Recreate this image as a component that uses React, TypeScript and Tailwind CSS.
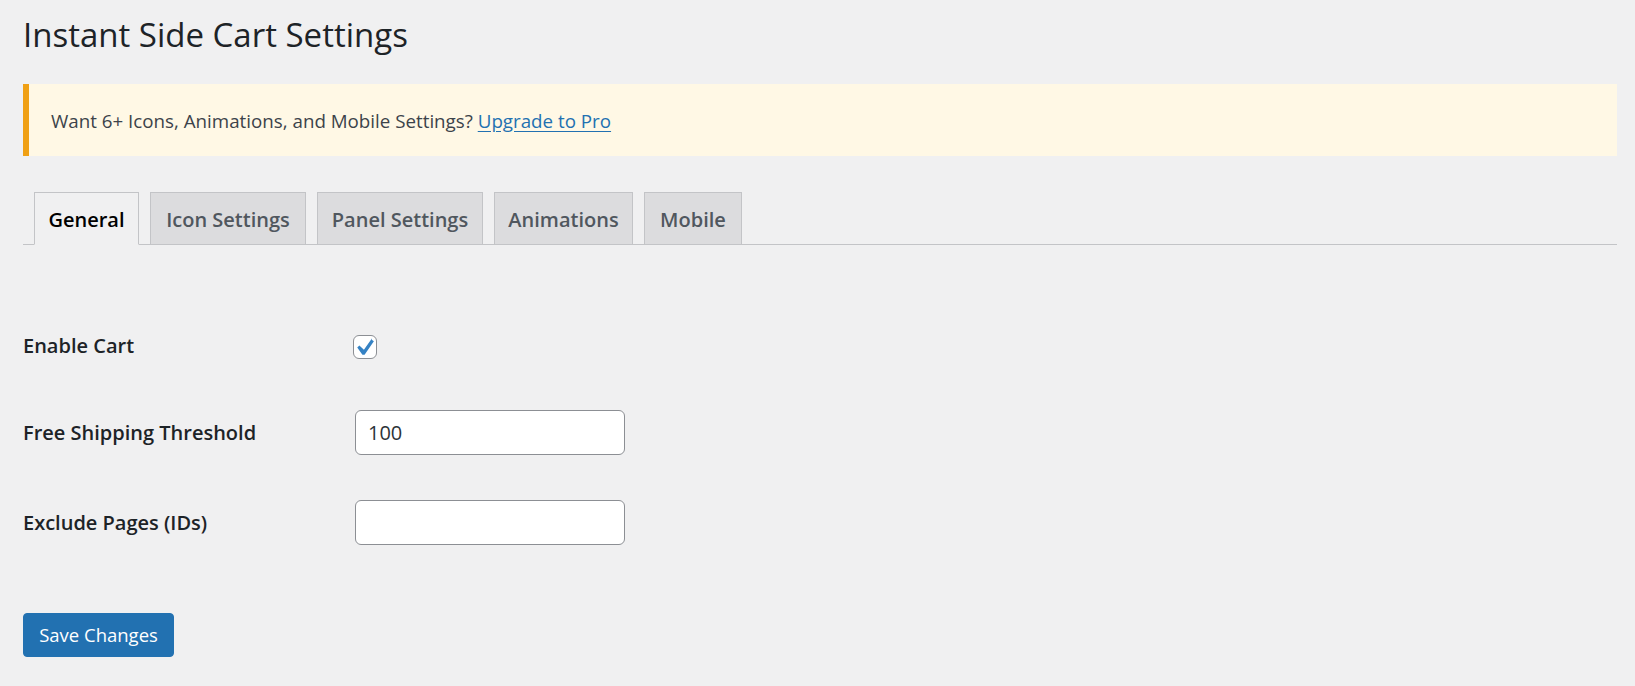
import { useState } from "react";

const tabs = [
  { label: "General", width: "w-[105px]" },
  { label: "Icon Settings", width: "w-[156px]" },
  { label: "Panel Settings", width: "w-[166px]" },
  { label: "Animations", width: "w-[139px]" },
  { label: "Mobile", width: "w-[98px]" },
];

export default function App() {
  const [active, setActive] = useState("General");
  const [enabled, setEnabled] = useState(true);
  const [threshold, setThreshold] = useState("100");
  const [exclude, setExclude] = useState("");

  return (
    <div className="min-h-screen bg-[#f0f0f1] pl-[23px] pr-[18px] font-['Open_Sans','Noto_Sans',sans-serif] text-[#3c434a]">
      <h1 className="pt-[14px] text-[33px] leading-[42px] font-normal text-[#1d2327]">
        Instant Side Cart Settings
      </h1>

      {/* Upsell notice */}
      <div className="mt-[28px] flex h-[72px] items-center border-l-[6px] border-[#f0a014] bg-[#fff8e5] pl-[22px]">
        <p className="text-[18.75px] leading-[27px] text-[#3c434a]">
          Want 6+ Icons, Animations, and Mobile Settings?{" "}
          <a href="#" className="text-[#2271b1] underline underline-offset-[3px]">
            Upgrade to Pro
          </a>
        </p>
      </div>

      {/* Tabs */}
      <nav className="mt-[36px] flex items-end gap-[11px] border-b border-[#c3c4c7] pl-[11px]">
        {tabs.map((t) => (
          <button
            key={t.label}
            type="button"
            onClick={() => setActive(t.label)}
            className={`-mb-px flex h-[53px] items-start justify-center border border-[#c3c4c7] pt-[14px] text-[20px] leading-[26px] font-semibold ${t.width} ${
              active === t.label
                ? "border-b-[#f0f0f1] bg-[#f0f0f1] text-black"
                : "bg-[#dcdcde] text-[#50575e]"
            }`}
          >
            {t.label}
          </button>
        ))}
      </nav>

      {/* Settings */}
      <div className="mt-[54px]">
        <div className="flex h-[88px]">
          <div className="w-[330px] shrink-0 pt-[33px] text-[20px] leading-[27px] font-semibold text-[#1d2327]">
            Enable Cart
          </div>
          <div className="pt-[36px]">
            <button
              type="button"
              onClick={() => setEnabled(!enabled)}
              className="relative block h-[24px] w-[24px] rounded-[6px] border border-[#8c8f94] bg-white"
            >
              {enabled && (
                <svg viewBox="0 0 20 20" className="absolute -left-[6px] -top-[4px] h-[32px] w-[32px]">
                  <path
                    d="M14.83 4.89l1.34.94-5.81 8.38H9.02L5.78 9.67l1.34-1.25 2.83 2.65 5.08-7.18z"
                    fill="#3582c4"
                  />
                </svg>
              )}
            </button>
          </div>
        </div>

        <div className="flex h-[90px]">
          <div className="w-[330px] shrink-0 pt-[32px] text-[20px] leading-[27px] font-semibold text-[#1d2327]">
            Free Shipping Threshold
          </div>
          <div className="pt-[23px]">
            <input
              type="text"
              value={threshold}
              onChange={(e) => setThreshold(e.target.value)}
              className="ml-[2px] h-[45px] w-[270px] rounded-[6px] border border-[#8c8f94] bg-white px-[12px] text-[20px] text-[#2c3338] outline-none"
            />
          </div>
        </div>

        <div className="flex h-[90px]">
          <div className="w-[330px] shrink-0 pt-[32px] text-[20px] leading-[27px] font-semibold text-[#1d2327]">
            Exclude Pages (IDs)
          </div>
          <div className="pt-[23px]">
            <input
              type="text"
              value={exclude}
              onChange={(e) => setExclude(e.target.value)}
              className="ml-[2px] h-[45px] w-[270px] rounded-[6px] border border-[#8c8f94] bg-white px-[12px] text-[20px] text-[#2c3338] outline-none"
            />
          </div>
        </div>
      </div>

      <button
        type="button"
        className="mt-[46px] h-[44px] w-[151px] rounded-[4px] border border-[#2271b1] bg-[#2271b1] text-[18.5px] text-white"
      >
        Save Changes
      </button>
    </div>
  );
}
